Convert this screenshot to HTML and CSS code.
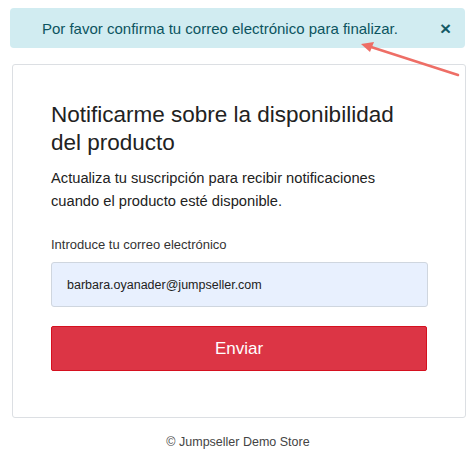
FILE: index.html
```html
<!DOCTYPE html>
<html lang="es">
<head>
    <meta charset="UTF-8">
    <meta name="viewport" content="width=device-width, initial-scale=1.0">
    <title>Notificarme sobre la disponibilidad</title>
    <link rel="stylesheet" href="styles.css">
</head>
<body>
    <div class="page">
        <div class="alert">
            <span class="alert-text">Por favor confirma tu correo electrónico para finalizar.</span>
            <button class="alert-close" type="button" aria-label="Cerrar">&times;</button>
        </div>

        <div class="notify-card">
            <h1>Notificarme sobre la disponibilidad del producto</h1>
            <p class="lead">Actualiza tu suscripción para recibir notificaciones cuando el producto esté disponible.</p>

            <form class="notify-form">
                <label for="email">Introduce tu correo electrónico</label>
                <input type="email" id="email" name="email" value="barbara.oyanader@jumpseller.com">
                <button type="submit" class="btn-send">Enviar</button>
            </form>
        </div>

        <p class="footer">&copy; Jumpseller Demo Store</p>

        <!-- annotation arrow pointing at the alert -->
        <svg class="arrow" width="472" height="90" viewBox="0 0 472 90">
            <line x1="458" y1="75" x2="368" y2="46" stroke="#ee6e66" stroke-width="2.5" stroke-linecap="round"/>
            <polygon points="361,44 374,42 370,52" fill="#ee6e66"/>
        </svg>
    </div>
</body>
</html>
```

FILE: styles.css
```css
body {
    font-family: "Liberation Sans", Arial, sans-serif;
    margin: 0;
    background: #ffffff;
    color: #212529;
}

.page {
    position: relative;
    padding: 8px 6px 0 10px;
}

.alert {
    display: flex;
    align-items: center;
    background-color: #d1ecf1;
    color: #0c5460;
    border-radius: 4px;
    height: 40px;
    padding: 0 14px 0 20px;
    margin-right: 1px;
    font-size: 15px;
}

.alert-text {
    flex: 1;
    text-align: center;
    padding-right: 30px;
}

.alert-close {
    background: none;
    border: none;
    color: #0c5460;
    font-family: "Liberation Sans", Arial, sans-serif;
    font-size: 19px;
    line-height: 1;
    padding: 0;
    -webkit-text-stroke: 0.6px #0c5460;
    cursor: pointer;
}

.notify-card {
    margin: 16px 0 0 2px;
    border: 1px solid #dcdfe3;
    border-radius: 3px;
    padding: 36px 37px 46px 38px;
}

.notify-card h1 {
    font-size: 22.5px;
    font-weight: normal;
    line-height: 28px;
    margin: 0 0 10px;
    max-width: 360px;
    color: #222222;
}

.lead {
    font-size: 14.7px;
    line-height: 23px;
    margin: 0 0 24px;
    max-width: 345px;
    color: #222222;
}

.notify-form label {
    display: block;
    font-size: 13px;
    color: #333333;
    margin-bottom: 10px;
}

.notify-form input {
    display: block;
    width: 100%;
    box-sizing: border-box;
    height: 45px;
    padding: 0 15px;
    font-family: "Liberation Sans", Arial, sans-serif;
    font-size: 12.5px;
    color: #222222;
    background-color: #e8f0fe;
    border: 1px solid #cfd6df;
    border-radius: 3px;
    margin-bottom: 19px;
}

.btn-send {
    display: block;
    width: calc(100% - 1px);
    height: 45px;
    background-color: #dc3545;
    border: 1px solid #d5101f;
    border-radius: 2px;
    color: #ffffff;
    font-family: "Liberation Sans", Arial, sans-serif;
    font-size: 17px;
}

.footer {
    text-align: center;
    font-size: 12.5px;
    color: #444444;
    margin: 17px 0 0;
}

.arrow {
    position: absolute;
    left: 0;
    top: 0;
    pointer-events: none;
}
```
